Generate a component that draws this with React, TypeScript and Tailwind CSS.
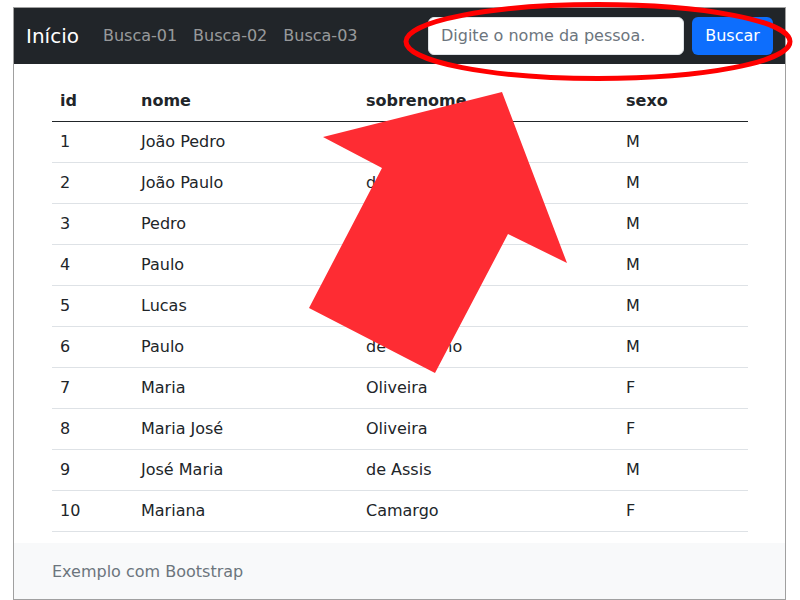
import React from 'react';

interface Pessoa {
  id: number;
  nome: string;
  sobrenome: string;
  sexo: 'M' | 'F';
}

const pessoas: Pessoa[] = [
  { id: 1, nome: 'João Pedro', sobrenome: 'da Silva', sexo: 'M' },
  { id: 2, nome: 'João Paulo', sobrenome: 'de Souza', sexo: 'M' },
  { id: 3, nome: 'Pedro', sobrenome: 'Santos', sexo: 'M' },
  { id: 4, nome: 'Paulo', sobrenome: 'Costa', sexo: 'M' },
  { id: 5, nome: 'Lucas', sobrenome: 'Lima', sexo: 'M' },
  { id: 6, nome: 'Paulo', sobrenome: 'de Carvalho', sexo: 'M' },
  { id: 7, nome: 'Maria', sobrenome: 'Oliveira', sexo: 'F' },
  { id: 8, nome: 'Maria José', sobrenome: 'Oliveira', sexo: 'F' },
  { id: 9, nome: 'José Maria', sobrenome: 'de Assis', sexo: 'M' },
  { id: 10, nome: 'Mariana', sobrenome: 'Camargo', sexo: 'F' },
];

const links = ['Busca-01', 'Busca-02', 'Busca-03'];

export default function App() {
  return (
    <div
      className="relative w-[800px] h-[600px] bg-white pl-[13px] pt-[7px] overflow-hidden text-[#212529]"
      style={{ fontFamily: '"DejaVu Sans", sans-serif' }}
    >
      <div className="w-[773px] h-[593px] border border-[#a0a0a0] flex flex-col">
        {/* navbar */}
        <nav className="h-[56px] shrink-0 bg-[#212529] flex items-center px-3">
          <span className="text-[20px] leading-[30px] text-white mr-4">Início</span>
          {links.map((l) => (
            <span key={l} className="px-2 text-base leading-6 text-[rgba(255,255,255,0.55)]">
              {l}
            </span>
          ))}
          <div className="ml-auto flex items-center gap-2">
            <div className="w-[256px] h-[38px] bg-white border border-[#dee2e6] rounded-md flex items-center px-3 text-base text-[#6c757d]">
              Digite o nome da pessoa.
            </div>
            <div className="w-[81px] h-[38px] bg-[#0d6efd] rounded-md flex items-center justify-center text-base text-white">
              Buscar
            </div>
          </div>
        </nav>

        {/* tabela */}
        <div className="ml-[38px] mr-[37px] mt-[17px]">
          <table className="w-full border-collapse text-base text-left">
            <colgroup>
              <col className="w-[81px]" />
              <col className="w-[225px]" />
              <col className="w-[260px]" />
              <col className="w-[130px]" />
            </colgroup>
            <thead>
              <tr className="border-b border-[#212529]">
                <th className="px-2 py-2 leading-6 font-bold">id</th>
                <th className="px-2 py-2 leading-6 font-bold">nome</th>
                <th className="px-2 py-2 leading-6 font-bold">sobrenome</th>
                <th className="px-2 py-2 leading-6 font-bold">sexo</th>
              </tr>
            </thead>
            <tbody>
              {pessoas.map((p) => (
                <tr key={p.id} className="border-b border-[#dee2e6]">
                  <td className="px-2 py-2 leading-6">{p.id}</td>
                  <td className="px-2 py-2 leading-6">{p.nome}</td>
                  <td className="px-2 py-2 leading-6">{p.sobrenome}</td>
                  <td className="px-2 py-2 leading-6">{p.sexo}</td>
                </tr>
              ))}
            </tbody>
          </table>
        </div>

        {/* rodapé */}
        <footer className="mt-auto h-[56px] shrink-0 bg-[#f8f9fa] flex items-center px-[38px] pt-px text-base text-[#6c757d]">
          Exemplo com Bootstrap
        </footer>
      </div>

      {/* anotações em vermelho */}
      <svg
        className="absolute left-0 top-0 pointer-events-none"
        width="800"
        height="600"
        viewBox="0 0 800 600"
      >
        <ellipse cx="598" cy="41.5" rx="192" ry="37" fill="none" stroke="#ff0000" strokeWidth="5" />
        <polygon
          points="502,92 567,263 508,234 435,373 309,308 382,168 323,137"
          fill="#fe2c33"
        />
      </svg>
    </div>
  );
}
